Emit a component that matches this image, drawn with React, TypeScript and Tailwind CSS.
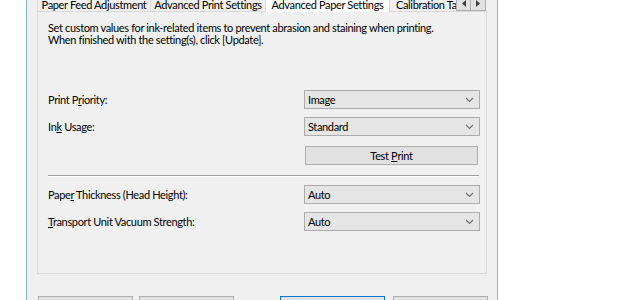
import React from "react";

const font = { fontFamily: 'Lato, "Noto Sans", sans-serif' };

function Chevron() {
  return (
    <svg width="9" height="6" viewBox="0 0 9 6" className="shrink-0">
      <path d="M1 1 L4.5 4.5 L8 1" fill="none" stroke="#707070" strokeWidth="1.2" />
    </svg>
  );
}

function Select({ value }: { value: string }) {
  return (
    <div className="ml-auto mr-[6px] flex h-[19px] w-[176px] items-center justify-between border border-[#acacac] bg-[#e5e5e5] pl-[3px] pr-[5px] text-black">
      <span className="leading-[17px]">{value}</span>
      <Chevron />
    </div>
  );
}

function Row({ label, value }: { label: React.ReactNode; value: string }) {
  return (
    <div className="flex items-center">
      <span className="whitespace-nowrap leading-[19px]">{label}</span>
      <Select value={value} />
    </div>
  );
}

export default function App() {
  return (
    <div className="h-[300px] w-[630px] overflow-hidden bg-white text-[11px] tracking-[-0.35px] text-black" style={font}>
      <div className="ml-[26px] flex h-[300px] w-[472px] flex-col overflow-hidden border-x border-[#7eb4ea] bg-[#f0f0f0] pl-[10px] pr-[10px]">
        {/* tab strip */}
        <div className="relative z-10 -mt-[4px] flex h-[15px] items-end whitespace-nowrap">
          <div className="flex h-[15px] w-[114px] shrink-0 items-center justify-center border border-b-0 border-[#d9d9d9] bg-[#f0f0f0] leading-[13px]">
            Paper Feed Adjustment
          </div>
          <div className="flex h-[15px] w-[115px] shrink-0 items-center justify-center border border-b-0 border-l-0 border-[#d9d9d9] bg-[#f0f0f0] leading-[13px]">
            Advanced Print Settings
          </div>
          <div className="-mb-[1px] flex h-[18px] w-[124px] shrink-0 items-center justify-center self-end border border-b-0 border-l-0 border-[#d9d9d9] bg-white pt-[1px] leading-[13px]">
            Advanced Paper Settings
          </div>
          <div className="flex h-[15px] w-[66px] shrink-0 items-center overflow-hidden border-t border-[#d9d9d9] bg-[#f0f0f0] pl-[6px] leading-[13px]">
            Calibration Tab
          </div>
          <div className="flex h-[15px] w-[15px] shrink-0 items-center justify-center border border-[#adadad] bg-[#e1e1e1]">
            <svg width="4" height="7" viewBox="0 0 4 7">
              <path d="M4 0 L0 3.5 L4 7 Z" fill="#404040" />
            </svg>
          </div>
          <div className="flex h-[15px] w-[15px] shrink-0 items-center justify-center border border-l-0 border-[#adadad] bg-[#e1e1e1]">
            <svg width="4" height="7" viewBox="0 0 4 7">
              <path d="M0 0 L4 3.5 L0 7 Z" fill="#404040" />
            </svg>
          </div>
        </div>
        {/* panel */}
        <div className="flex h-[263px] w-[450px] shrink-0 flex-col border border-[#d9d9d9] bg-[#f0f0f0] pl-[10px]">
          <div className="mt-[10px] whitespace-nowrap leading-[12px]">
            <div>Set custom values for ink-related items to prevent abrasion and staining when printing.</div>
            <div>When finished with the setting(s), click [Update].</div>
          </div>
          <div className="mt-[44px] flex flex-col gap-[8px]">
            <Row label={<>Print P<u>r</u>iority:</>} value="Image" />
            <Row label={<>In<u>k</u> Usage:</>} value="Standard" />
          </div>
          <div className="mt-[10px] flex">
            <div className="ml-auto mr-[8px] flex h-[19px] w-[173px] items-center justify-center whitespace-pre border border-[#adadad] bg-[#e1e1e1] leading-[17px]">
              {"Test "}<u>P</u>{"rint"}
            </div>
          </div>
          <div className="mr-[7px] mt-[10px] h-[2px] border-b border-t border-b-white border-t-[#a0a0a0]" />
          <div className="mt-[8px] flex flex-col gap-[8px]">
            <Row label={<>Pape<u>r</u> Thickness (Head Height):</>} value="Auto" />
            <Row label={<><u>T</u>ransport Unit Vacuum Strength:</>} value="Auto" />
          </div>
        </div>
        {/* buttons */}
        <div className="mt-[22px] flex">
          <div className="ml-[1px] h-[22px] w-[95px] shrink-0 border border-[#adadad] bg-[#e1e1e1]" />
          <div className="ml-[6px] h-[22px] w-[95px] shrink-0 border border-[#adadad] bg-[#e1e1e1]" />
          <div className="ml-[46px] h-[22px] w-[105px] shrink-0 border border-[#0078d7] bg-[#e1e1e1]" />
          <div className="ml-[8px] h-[22px] w-[95px] shrink-0 border border-[#adadad] bg-[#e1e1e1]" />
        </div>
      </div>
    </div>
  );
}
